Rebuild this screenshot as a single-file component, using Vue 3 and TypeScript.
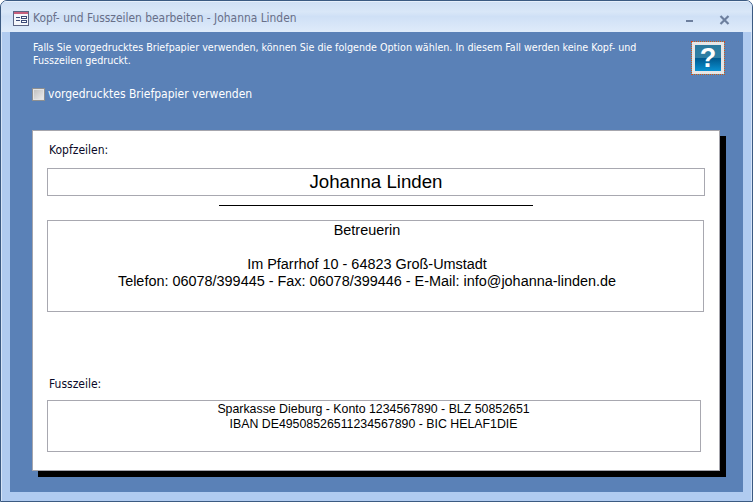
<script setup lang="ts">
const title = 'Kopf- und Fusszeilen bearbeiten - Johanna Linden'
</script>

<template>
  <div class="window">
    <header class="titlebar">
      <svg class="appicon" width="16" height="15" viewBox="0 0 16 15">
        <rect x="0.5" y="0.5" width="15" height="14" fill="#f4f6fa" stroke="#5c6484" />
        <rect x="1" y="1" width="14" height="2" fill="#c65f7c" />
        <rect x="3" y="6" width="4" height="1" fill="#3c4a78" />
        <rect x="3" y="9" width="4" height="1" fill="#3c4a78" />
        <rect x="8.5" y="5.5" width="5" height="2" fill="#fff" stroke="#3c4a78" />
        <rect x="8.5" y="9.5" width="5" height="2" fill="#fff" stroke="#3c4a78" />
      </svg>
      <span class="title">{{ title }}</span>
      <span class="min"></span>
      <svg class="close" width="11" height="10" viewBox="0 0 11 10">
        <path d="M1.5 1 L9.5 9 M9.5 1 L1.5 9" stroke="#6d7f9e" stroke-width="2.2" fill="none" />
      </svg>
    </header>
    <main class="content">
      <div class="top">
        <div class="intro">
          <p class="note">Falls Sie vorgedrucktes Briefpapier verwenden, können Sie die folgende Option wählen. In diesem Fall werden keine Kopf- und Fusszeilen gedruckt.</p>
          <label class="check"><span class="box"></span>vorgedrucktes Briefpapier verwenden</label>
        </div>
        <button class="help" type="button">
          <span class="help-inner">?</span>
        </button>
      </div>
      <section class="panel">
        <div class="label first">Kopfzeilen:</div>
        <div class="field name">Johanna Linden</div>
        <div class="rule"></div>
        <div class="field address">
          <div>Betreuerin</div>
          <div>&nbsp;</div>
          <div>Im Pfarrhof 10 - 64823 Groß-Umstadt</div>
          <div>Telefon: 06078/399445 - Fax: 06078/399446 - E-Mail: info@johanna-linden.de</div>
        </div>
        <div class="label second">Fusszeile:</div>
        <div class="field footer">
          <div>Sparkasse Dieburg - Konto 1234567890 - BLZ 50852651</div>
          <div>IBAN DE49508526511234567890 - BIC HELAF1DIE</div>
        </div>
      </section>
    </main>
  </div>
</template>

<style>
html, body { margin: 0; padding: 0; background: #fff; }
</style>

<style scoped>
.window {
  width: 753px;
  height: 502px;
  box-sizing: border-box;
  border: 1px solid #3b5a82;
  border-radius: 7px 7px 0 0;
  background: #b0cbf0;
  display: flex;
  flex-direction: column;
  overflow: hidden;
  font-family: "DejaVu Sans Condensed", "DejaVu Sans", sans-serif;
  box-shadow: inset 1px 0 0 #d6e4f7, inset -1px 0 0 #d6e4f7;
}
.titlebar {
  height: 31px;
  flex: none;
  display: flex;
  align-items: center;
  padding: 3px 22px 0 12px;
  box-sizing: border-box;
  background: linear-gradient(#cfdff4 0, #d9e7f8 35%, #cfe0f6 50%, #dfebfa 100%);
  box-shadow: inset 0 1px 0 #e6effb;
}
.appicon { flex: none; margin-right: 4px; }
.title {
  flex: 1;
  font-size: 11.9px;
  color: #686f88;
  white-space: nowrap;
}
.min {
  width: 7px;
  height: 2px;
  background: #6d7f9e;
  margin: 6px 26px 0 0;
}
.close { flex: none; margin-top: 3px; }
.content {
  flex: 1;
  margin: 0 9px 9px 9px;
  background: #5a81b7;
  padding: 8px 0 0 22px;
  min-height: 0;
}
.top {
  display: flex;
  height: 90px;
}
.intro { width: 659px; padding: 1px 0 0 1px; box-sizing: border-box; }
.note {
  margin: 0;
  font-size: 10.65px;
  line-height: 13px;
  color: #fff;
  width: 640px;
}
.check {
  display: flex;
  align-items: center;
  margin: 20px 0 0 0;
  font-size: 12px;
  color: #fff;
}
.box {
  width: 13px;
  height: 13px;
  box-sizing: border-box;
  margin: 0 3px 0 -1px;
  border: 1px solid #8e8f8f;
  background: linear-gradient(135deg, #bdbdbd, #efefef);
  outline: 1px solid #e4e4e4;
  outline-offset: -2px;
}
.help {
  width: 34px;
  height: 34px;
  box-sizing: border-box;
  margin: 1px 0 0 0;
  padding: 0;
  background: #49a6bd;
  border: 1px dotted #d8481c;
}
.help-inner {
  display: block;
  width: 32px;
  height: 32px;
  box-sizing: border-box;
  border: 3px solid #e6e6e6;
  font: bold 27px/26px "Liberation Sans", sans-serif;
  text-align: center;
  color: #fff;
  background: linear-gradient(#2a7a9e 0, #2f7fa5 48%, #005a90 52%, #0a90d0 100%);
}
.panel {
  width: 688px;
  height: 341px;
  box-sizing: border-box;
  border: 1px solid #a6a6ad;
  background: #fff;
  box-shadow: 6px 6px 0 #000;
  padding: 12px 0 0 14px;
  color: #000;
}
.label {
  font-size: 12px;
  line-height: 14px;
  color: #0a0a28;
  padding-left: 2px;
}
.field {
  box-sizing: border-box;
  border: 1px solid #a8a8b0;
  font-family: "Liberation Sans", Arial, sans-serif;
  text-align: center;
  color: #000;
}
.name {
  width: 658px;
  height: 28px;
  margin-top: 11px;
  font-size: 18.7px;
  line-height: 26px;
}
.rule {
  width: 314px;
  height: 1px;
  background: #000;
  margin: 9px 0 14px 172px;
}
.address {
  width: 657px;
  height: 92px;
  font-size: 14.43px;
  line-height: 17px;
  padding: 1px 17px 0 0;
}
.second { margin-top: 65px; }
.footer {
  width: 654px;
  height: 52px;
  margin-top: 9px;
  font-size: 12.35px;
  line-height: 15px;
  padding: 1px 1px 0 0;
}
</style>
